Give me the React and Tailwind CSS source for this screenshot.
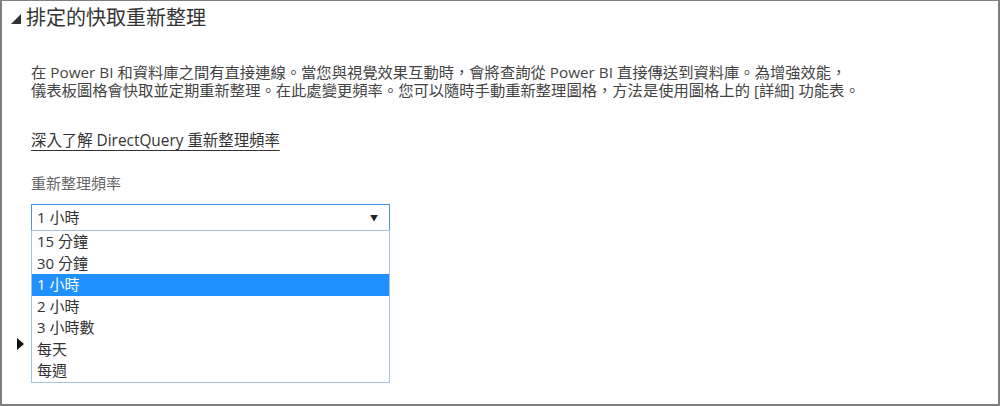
const font = {
  fontFamily: '"Open Sans", "Noto Sans CJK TC", sans-serif',
};

const options = ['15 分鐘', '30 分鐘', '1 小時', '2 小時', '3 小時數', '每天', '每週'];

export default function App() {
  const selected = '1 小時';

  return (
    <div
      style={font}
      className="w-[1000px] h-[406px] bg-white border-t border-l-2 border-r-2 border-b-2 border-[#7f7f7f] overflow-hidden"
    >
      {/* section header */}
      <div className="flex items-center h-7 mt-[3px] pl-[9px] text-[#333]">
        <svg width="10" height="10" viewBox="0 0 10 10" className="mr-[5px] mt-[1px]">
          <polygon points="10,0 10,10 0,10" fill="#333" />
        </svg>
        <span className="text-[20px] leading-7">排定的快取重新整理</span>
      </div>

      <div className="pl-[29px] pr-6">
        <p className="mt-[31px] text-[15.3px] leading-[18px] text-[#444]">
          在 Power BI 和資料庫之間有直接連線。當您與視覺效果互動時，會將查詢從 Power BI 直接傳送到資料庫。為增強效能，
          <br />
          儀表板圖格會快取並定期重新整理。在此處變更頻率。您可以隨時手動重新整理圖格，方法是使用圖格上的 [詳細] 功能表。
        </p>

        <a className="inline-block mt-[33px] text-[15.4px] leading-[18px] text-[#333] underline underline-offset-[4px] decoration-[#333]">
          深入了解 DirectQuery 重新整理頻率
        </a>

        <div className="mt-[22px] text-[15px] leading-[18px] text-[#666]">重新整理頻率</div>

        <div className="relative mt-[12px] w-[359px]">
          <div className="flex items-center justify-between h-[27px] border border-[#4f90e0] pl-[5px] pr-[11px] text-[15px] text-[#333]">
            <span>{selected}</span>
            <span className="text-[8px] text-[#222]">▼</span>
          </div>

          <ul className="absolute left-0 top-[26px] w-full bg-white border border-[#a4c2ea] z-10">
            {options.map((o) => (
              <li
                key={o}
                className={
                  o === selected
                    ? 'h-[21.5px] leading-[21.5px] pl-[5px] text-[15px] bg-[#1e90ff] text-white'
                    : 'h-[21.5px] leading-[21.5px] pl-[5px] text-[15px] text-[#333]'
                }
              >
                {o}
              </li>
            ))}
          </ul>
        </div>
      </div>

      {/* collapsed section under the open list */}
      <div className="flex items-center h-3 mt-[107px] pl-[15px]">
        <svg width="7" height="12" viewBox="0 0 7 12">
          <polygon points="0,0 7,6 0,12" fill="#111" />
        </svg>
      </div>
    </div>
  );
}
